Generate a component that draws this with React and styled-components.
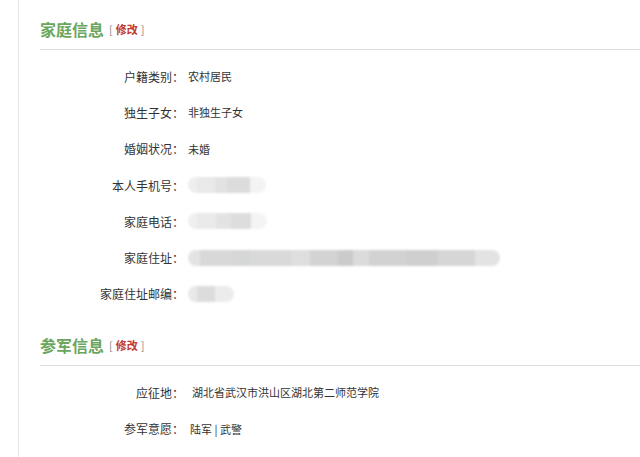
import React from 'react';
import styled, { createGlobalStyle } from 'styled-components';

const GlobalStyle = createGlobalStyle`
  html, body {
    margin: 0;
    padding: 0;
    background: #fff;
  }
  body {
    font-family: "Noto Sans CJK SC", "Noto Sans", sans-serif;
    color: #333;
  }
`;

const Page = styled.div`
  width: 640px;
  height: 457px;
  overflow: hidden;
  padding-left: 18px;
  box-sizing: border-box;
`;

const Panel = styled.div`
  border-left: 1px solid #e6e6e6;
  min-height: 457px;
  padding-left: 21px;
  padding-top: 17px;
`;

const Section = styled.section`
  margin-bottom: ${(p) => p.$after || 0}px;
`;

const TitleRow = styled.div`
  display: flex;
  align-items: center;
  height: 24px;
`;

const Title = styled.h2`
  margin: 0;
  font-size: 16px;
  font-weight: 700;
  color: #6aa65e;
  letter-spacing: 0;
`;

const Edit = styled.span`
  margin-left: 5px;
  font-size: 11px;
  color: #888;
  b {
    color: #c0392b;
    font-weight: 700;
    margin: 0 3px;
  }
`;

const Divider = styled.div`
  height: 1px;
  background: #dedede;
  margin: 8px 0 8px;
`;

const Row = styled.div`
  display: flex;
  align-items: center;
  height: 36.3px;
  font-size: 12px;
`;

const Label = styled.span`
  width: 144px;
  text-align: right;
  color: #333;
`;

const Value = styled.span`
  margin-left: ${(p) => p.$gap || 4}px;
  color: #333;
  font-size: 11px;
`;

const Mask = styled.span`
  display: block;
  margin-left: 4px;
  width: ${(p) => p.$w}px;
  height: 16px;
  border-radius: 8px;
  background: ${(p) => p.$bg};
  filter: blur(0.8px);
`;

const phoneBg =
  'linear-gradient(90deg, #eeeeee 0 12%, #e9e9e9 12% 35%, #e2e2e2 35% 50%, #dcdcdc 50% 80%, #f3f3f3 80% 100%)';
const telBg =
  'linear-gradient(90deg, #efefef 0 12%, #eaeaea 12% 35%, #e3e3e3 35% 55%, #dddddd 55% 80%, #f4f4f4 80% 100%)';
const addrBg =
  'linear-gradient(90deg, #e4e4e4 0 4%, #d8d8d8 4% 14%, #d5d7d6 14% 20%, #d9d9d9 20% 33%, #dedede 33% 39%, #d3d3d3 39% 48%, #cbcbcb 48% 53%, #dbdbdb 53% 58%, #d2d2d2 58% 70%, #cfcfcf 70% 80%, #d6d6d6 80% 92%, #e3e3e3 92% 100%)';
const zipBg =
  'linear-gradient(90deg, #e8e8e8 0 20%, #dcdcdc 20% 58%, #ececec 58% 100%)';

const family = [
  { label: '户籍类别：', value: '农村居民' },
  { label: '独生子女：', value: '非独生子女' },
  { label: '婚姻状况：', value: '未婚' },
  { label: '本人手机号：', mask: { w: 78, bg: phoneBg } },
  { label: '家庭电话：', mask: { w: 79, bg: telBg } },
  { label: '家庭住址：', mask: { w: 312, bg: addrBg } },
  { label: '家庭住址邮编：', mask: { w: 46, bg: zipBg } },
];

const army = [
  { label: '应征地：', value: '湖北省武汉市洪山区湖北第二师范学院', gap: 8 },
  { label: '参军意愿：', value: '陆军 | 武警', gap: 6 },
];

function InfoSection({ title, rows, after }) {
  return (
    <Section $after={after}>
      <TitleRow>
        <Title>{title}</Title>
        <Edit>
          [<b>修改</b>]
        </Edit>
      </TitleRow>
      <Divider />
      {rows.map((r) => (
        <Row key={r.label}>
          <Label>{r.label}</Label>
          {r.mask ? (
            <Mask $w={r.mask.w} $bg={r.mask.bg} />
          ) : (
            <Value $gap={r.gap}>{r.value}</Value>
          )}
        </Row>
      ))}
    </Section>
  );
}

export default function App() {
  return (
    <>
      <GlobalStyle />
      <Page>
        <Panel>
          <InfoSection title="家庭信息" rows={family} after={21} />
          <InfoSection title="参军信息" rows={army} />
        </Panel>
      </Page>
    </>
  );
}
